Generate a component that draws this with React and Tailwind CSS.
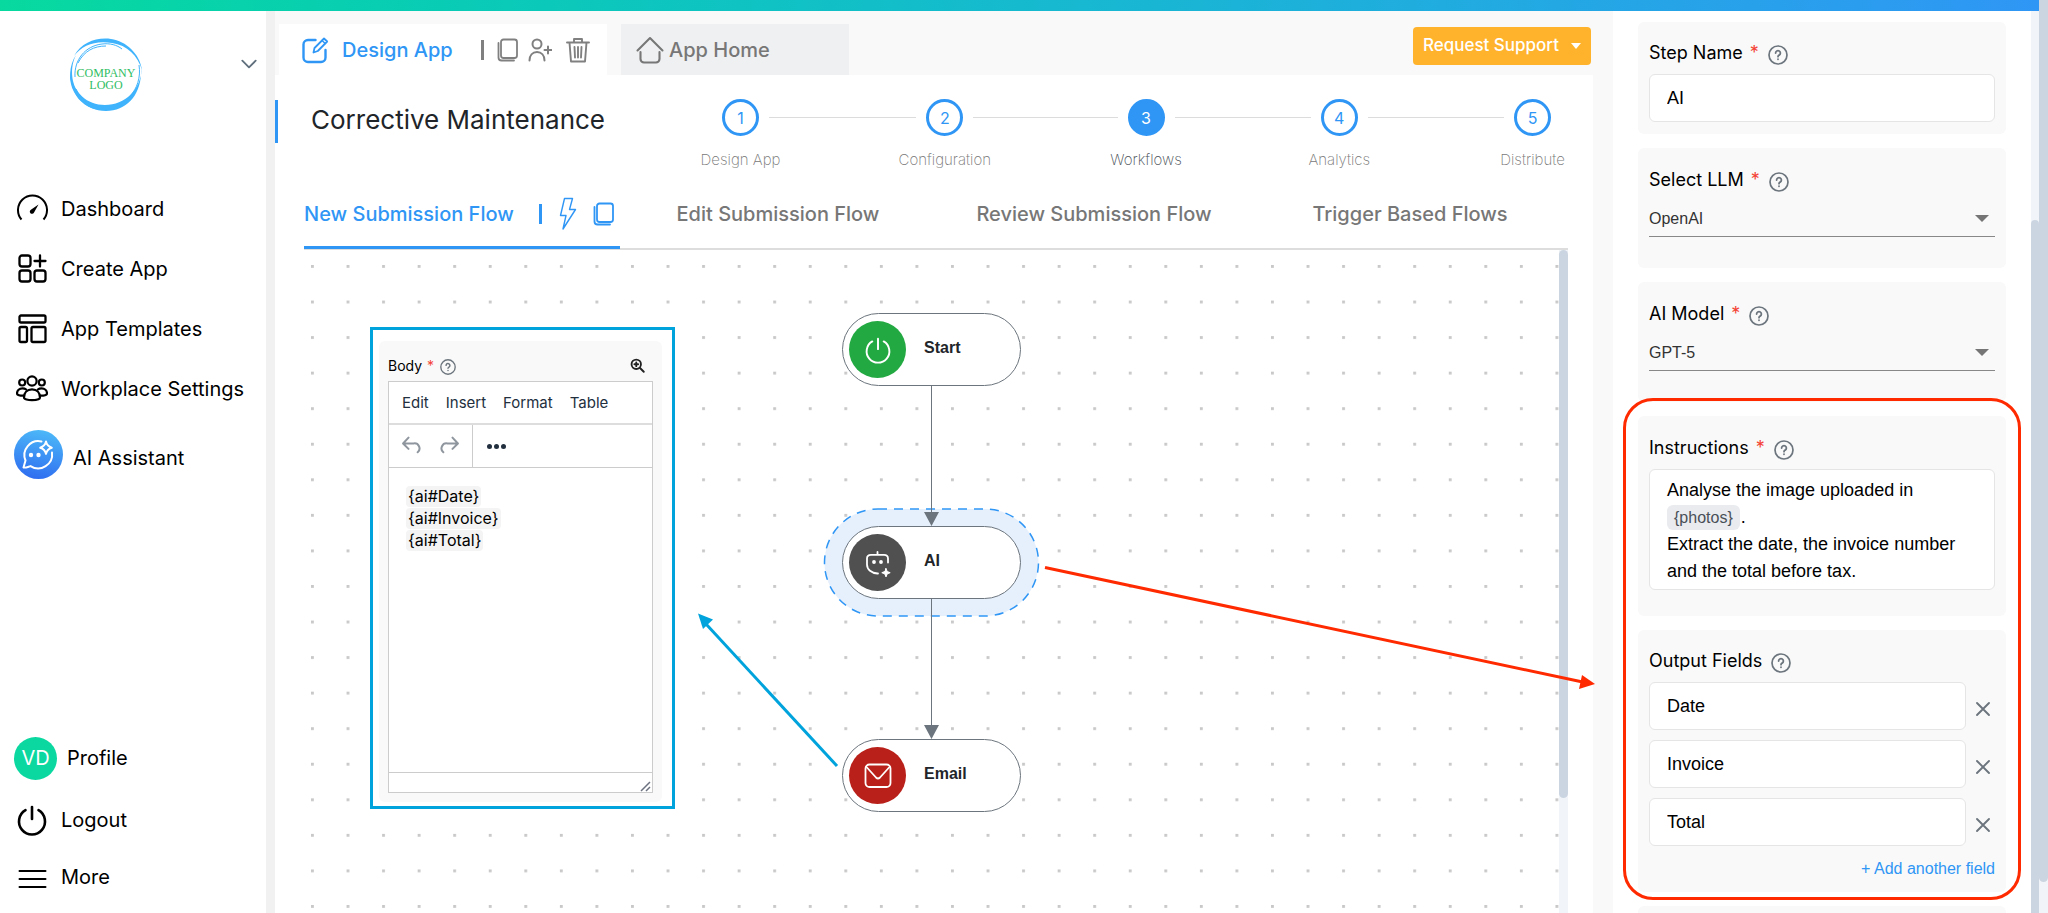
import { useState } from 'react';

const NAV = [
  { label: 'Dashboard', Icon: GaugeIcon },
  { label: 'Create App', Icon: CreateIcon },
  { label: 'App Templates', Icon: TemplateIcon },
  { label: 'Workplace Settings', Icon: TeamIcon },
];

const STEPS = [
  { label: 'Design App', grow: 'flex-[204]' },
  { label: 'Configuration', grow: 'flex-[201]' },
  { label: 'Workflows', grow: 'flex-[193]' },
  { label: 'Analytics', grow: 'flex-[193]' },
  { label: 'Distribute', grow: 'flex-none' },
];

const FLOWS = ['Edit Submission Flow', 'Review Submission Flow', 'Trigger Based Flows'];

function Svg({ className, children, box = '0 0 24 24', width = 2 }) {
  return (
    <svg viewBox={box} className={className} fill="none" stroke="currentColor" strokeWidth={width}
      strokeLinecap="round" strokeLinejoin="round" aria-hidden="true">
      {children}
    </svg>
  );
}

function GaugeIcon() {
  return (
    <Svg box="0 0 32 32" className="size-8">
      <path d="M5.5 26.5A14.5 14.5 0 1 1 27.5 26.5" strokeLinecap="butt" />
      <path d="M22.5 11.5l-4.6 8.2a2.2 2.2 0 1 1-3-3z" fill="currentColor" stroke="none" />
    </Svg>
  );
}

function CreateIcon() {
  return (
    <Svg box="0 0 32 32" className="size-8" width={2.3}>
      <rect x="3.5" y="2.5" width="11" height="11" rx="2.5" />
      <rect x="3.5" y="17.5" width="11" height="11" rx="2.5" />
      <rect x="18.5" y="17.5" width="11" height="11" rx="2.5" />
      <path d="M24 2.5v11M18.5 8h11" />
    </Svg>
  );
}

function TemplateIcon() {
  return (
    <Svg box="0 0 32 32" className="size-8" width={2.3}>
      <rect x="3.5" y="2.5" width="26" height="7" rx="1.5" />
      <rect x="3.5" y="14" width="7.5" height="15" rx="1.5" />
      <rect x="15.5" y="14" width="14" height="15" rx="1.5" />
    </Svg>
  );
}

function TeamIcon() {
  return (
    <Svg box="0 0 32 32" className="size-8" width={2.2}>
      <circle cx="16" cy="8" r="4.6" />
      <circle cx="6.2" cy="9.5" r="3" />
      <circle cx="25.8" cy="9.5" r="3" />
      <path d="M8 24.5c0-5 3.3-8.2 8-8.2s8 3.2 8 8.2c0 1.7-4 2.7-8 2.7s-8-1-8-2.700z" />
      <path d="M10.2 16.500c-1-.8-2.400-1.200-3.800-1.200-3 0-5.400 2.200-5.400 5.200 0 1.500 3 2.300 6.500 2.200M21.800 16.500c1-.8 2.400-1.200 3.800-1.200 3 0 5.400 2.200 5.400 5.200 0 1.500-3 2.300-6.500 2.200" />
    </Svg>
  );
}

function AssistantIcon() {
  return (
    <svg viewBox="0 0 49 49" className="size-[49px]" fill="none" aria-hidden="true">
      <defs>
        <linearGradient id="assistant" x1="0.6" y1="0" x2="0.4" y2="1">
          <stop offset="0" stopColor="#4cb8f8" />
          <stop offset="1" stopColor="#2f6df0" />
        </linearGradient>
      </defs>
      <circle cx="24.5" cy="24.5" r="24.5" fill="url(#assistant)" />
      <g stroke="#fff" strokeWidth="2" strokeLinecap="round" strokeLinejoin="round">
        <path d="M27.5 11.5A14 14 0 0 0 11.5 30.5L9.5 37.5c1.8.6 3.8-.4 7-1.400A14 14 0 0 0 38 22.500" />
        <path d="M32 11.5c.8 3.7 2 5 5.800 6.200-3.800 1.200-5 2.500-5.800 6.200-.8-3.700-2-5-5.800-6.200 3.800-1.200 5-2.500 5.800-6.200z" />
      </g>
      <circle cx="17" cy="25" r="2.2" fill="#fff" />
      <circle cx="24.5" cy="25" r="2.2" fill="#fff" />
    </svg>
  );
}

function PowerIcon({ className, width = 2.6 }) {
  return (
    <Svg box="0 0 32 32" className={className} width={width}>
      <path d="M16 3v12" />
      <path d="M9.5 6.2a13 13 0 1 0 13 0" />
    </Svg>
  );
}

function MenuIcon() {
  return (
    <Svg box="0 0 32 32" className="size-8">
      <path d="M3.5 8h26M3.5 16h26M3.5 24h26" />
    </Svg>
  );
}

function CopyIcon({ className }) {
  return (
    <Svg className={className} width={1.8}>
      <rect x="5" y="1.5" width="16" height="18.5" rx="2.5" />
      <path d="M2.5 5v14.5a3 3 0 0 0 3 3H18" />
    </Svg>
  );
}

function EditIcon() {
  return (
    <Svg box="0 0 28 28" className="size-7" width={2.4}>
      <path d="M14.5 4H7a4.500 4.500 0 0 0-4.500 4.500v13A4.500 4.500 0 0 0 7 26h13a4.500 4.500 0 0 0 4.500-4.500V14" />
      <path d="M12.500 16.500l1-4.500L23 2.500l3.200 3L16.800 15z" strokeWidth="1.8" />
      <path d="M21 4.500l3.200 3" strokeWidth="1.5" />
    </Svg>
  );
}

function UserPlusIcon() {
  return (
    <Svg className="size-6">
      <circle cx="9" cy="6" r="4.5" />
      <path d="M1.500 22.500c0-5 3-8.500 7.500-8.500s7.500 3.500 7.500 8.500M20 8.500v7M16.500 12h7" />
    </Svg>
  );
}

function TrashIcon() {
  return (
    <Svg box="0 0 26 26" className="size-[26px]" width={1.9}>
      <path d="M2 5.500h22M9 5.500V2h8v3.500M4.500 5.500L6 24.500h14l1.500-19M9.500 10l.5 10.500M13 10v10.500M16.500 10l-.5 10.500" />
    </Svg>
  );
}

function HomeIcon() {
  return (
    <Svg box="0 0 28 28" className="size-7" width={2.1}>
      <path d="M1.500 14.500L14 2l12.500 12.500" />
      <path d="M4.500 16v7a3.500 3.500 0 0 0 3.500 3.500h12a3.500 3.500 0 0 0 3.500-3.500v-7" />
    </Svg>
  );
}

function BoltIcon() {
  return (
    <Svg box="0 0 20 34" className="h-[34px] w-5" width={1.4}>
      <path d="M6.500 1.500h8l-3 11h6L5 32l3-13.500H2.500z" />
    </Svg>
  );
}

function HelpIcon({ className }) {
  return (
    <Svg box="0 0 20 20" className={className} width={1.7}>
      <circle cx="10" cy="10" r="9" />
      <path d="M7.600 8a2.400 2.400 0 1 1 3.600 2.100c-.8.500-1.200.8-1.200 1.600M10 14.200v.1" strokeWidth="1.8" />
    </Svg>
  );
}

function Logo() {
  return (
    <div className="relative size-[76px]">
      <svg viewBox="0 0 76 76" className="size-full" fill="#3fb4fd" aria-hidden="true">
        <path d="M6 19C14 5 29 0 43 2c15 2 29 15 31 31-4-14-15-25-30-27C28 3 14 8 6 19z" />
        <path d="M2 36c0 21 15 38 36 38 20 0 34-15 35-37l1-7c-1 23-17 38-37 38C19 68 6 56 2 36z" />
        <path d="M8 18C1 28 0 44 6 55c5 10 15 17 26 18C18 68 8 58 5 44 3 35 4 26 8 18z" />
        <g fill="none" stroke="#3fb4fd" strokeWidth="1">
          <path d="M7 40C6 23 17 9 34 7c8-1 15 1 20 5" />
          <path d="M10 26C16 14 26 9 38 9M8 52c4 9 12 15 20 17M71 28c2 12-2 24-9 31" />
        </g>
      </svg>
      <div className="absolute inset-x-0 top-[30px] text-center font-['Liberation_Serif',serif] text-[12px] leading-[12px] text-[#2fbd63]">
        COMPANY<br />LOGO
      </div>
    </div>
  );
}

function Sidebar() {
  return (
    <aside className="flex w-[275px] shrink-0 flex-col border-r-[9px] border-[#f1f1f1] bg-white text-[20px] text-black">
      <div className="flex h-[168px] shrink-0 items-start justify-between pt-[26px] pr-[7px] pl-[68px]">
        <Logo />
        <button aria-label="Switch company" className="mt-[17px] text-[#5f6f7c]">
          <Svg className="size-5" width={2.2}><path d="M4 8l8 8 8-8" /></Svg>
        </button>
      </div>
      <nav className="flex flex-1 flex-col">
        {NAV.map(({ label, Icon }) => (
          <a key={label} href="#" className="flex h-[60px] items-center gap-[13px] pl-4">
            <Icon /> {label}
          </a>
        ))}
        <a href="#" className="mt-[10px] flex h-[50px] items-center gap-[10px] pl-[14px]">
          <AssistantIcon /> <span className="pt-2">AI Assistant</span>
        </a>
        <a href="#" className="mt-auto flex h-[62px] items-center gap-[10px] pl-[14px]">
          <span className="flex size-[43px] items-center justify-center rounded-full bg-[#0bd8a0] text-white">VD</span>
          Profile
        </a>
        <a href="#" className="flex h-[62px] items-center gap-[13px] pl-4">
          <PowerIcon className="size-8" /> Logout
        </a>
        <a href="#" className="mb-[10px] flex h-[52px] items-center gap-[13px] pl-4">
          <span className="pt-1"><MenuIcon /></span> More
        </a>
      </nav>
    </aside>
  );
}

function Stepper() {
  return (
    <ol className="flex flex-1 pt-6">
      {STEPS.map(({ label, grow }, i) => (
        <li key={label} className={`flex items-start ${grow}`}>
          <div className="flex w-[37px] shrink-0 flex-col items-center gap-[14px]">
            <span className={`flex size-[37px] items-center justify-center rounded-full border-[3px] border-[#2f96f5] text-[16px] ${i === 2 ? 'bg-[#2f96f5] text-white' : 'text-[#2f96f5]'}`}>
              {i + 1}
            </span>
            <span className={`text-[15px] leading-5 font-extralight whitespace-nowrap ${i === 2 ? 'text-[#495057]' : 'text-[#777]'}`}>{label}</span>
          </div>
          {i < STEPS.length - 1 && <span className="mx-[10px] mt-[18px] h-px flex-1 bg-[#dcdcdc]" />}
        </li>
      ))}
    </ol>
  );
}

function BodyEditor() {
  return (
    <section className="absolute top-[77px] left-[66px] flex h-[482px] w-[305px] border-[3px] border-[#00a3dc] bg-white pt-[11px] pr-[10px] pb-1 pl-[6px]">
      <div className="flex flex-1 flex-col rounded-md bg-[#f9f9f9] px-[9px] pb-[9px]">
        <div className="flex h-10 items-center justify-between pt-2 pr-2 text-[14px] text-black">
          <span className="flex items-center">
            Body <span className="ml-[5px] text-[#f44336]">*</span>
            <HelpIcon className="mt-1 ml-[6px] size-4 text-[#6c757d]" />
          </span>
          <button aria-label="Expand" className="text-[#222]">
            <Svg className="size-[15px]" width={3}><circle cx="10" cy="10" r="7.5" /><path d="M16 16l6 6M10 7v6M7 10h6" /></Svg>
          </button>
        </div>
        <div className="flex flex-1 flex-col border border-[#ccc] bg-white">
          <div className="flex h-[43px] items-center gap-[17px] border-b-2 border-[#ddd] px-[13px] pt-[2px] text-[15px] text-[#222f3e]">
            {['Edit', 'Insert', 'Format', 'Table'].map(m => <button key={m}>{m}</button>)}
          </div>
          <div className="flex h-[43px] border-b border-[#ccc]">
            <div className="flex w-[84px] items-center gap-[19px] border-r border-[#ccc] pl-3 text-[#8f969e]">
              <button aria-label="Undo"><Svg className="size-5" width={2.4}><path d="M9 2L2.500 9 9 15.500M3 9h12a6 6 0 0 1 5 10.500" /></Svg></button>
              <button aria-label="Redo"><Svg className="size-5" width={2.4}><path d="M15 2l6.500 7-6.500 6.500M21 9H9a6 6 0 0 0-5 10.500" /></Svg></button>
            </div>
            <button aria-label="More tools" className="flex items-center gap-[2px] px-[14px]">
              {[0, 1, 2].map(d => <span key={d} className="size-[5px] rounded-full bg-[#222f3e]" />)}
            </button>
          </div>
          <div contentEditable suppressContentEditableWarning role="textbox" aria-label="Body"
            className="flex flex-1 flex-col items-start gap-px pt-[18px] pl-[17px] text-[16px] leading-[21px] text-black outline-none">
            {['{ai#Date}', '{ai#Invoice}', '{ai#Total}'].map(tag => (
              <span key={tag} className="rounded bg-[#f4f4f4] px-[2px]">{tag}</span>
            ))}
          </div>
          <div className="flex h-5 items-end justify-end border-t border-[#ccc]">
            <svg viewBox="0 0 12 12" className="size-3" stroke="#6c7280" strokeWidth="1.5"><path d="M1 11L10 2M6 11l4-4" /></svg>
          </div>
        </div>
      </div>
    </section>
  );
}

function FlowNode({ label, className, color, children }) {
  return (
    <div className={`absolute left-[538px] flex h-[73px] w-[179px] items-center rounded-full border border-[#6c757d] bg-white pl-[6px] ${className}`}>
      <span className={`flex size-[57px] items-center justify-center rounded-full text-white ${color}`}>{children}</span>
      <span className="ml-[18px] pb-1 font-['Liberation_Sans',sans-serif] text-[16px] font-bold text-[#222529]">{label}</span>
    </div>
  );
}

function FlowCanvas() {
  return (
    <div className="relative min-h-0 flex-1">
      <svg className="absolute inset-0 size-full" aria-hidden="true">
        <defs>
          <pattern id="grid" width="20" height="20" patternUnits="userSpaceOnUse" patternTransform="translate(7 15) scale(1.7778)">
            <rect width="1.6" height="1.6" fill="#c8c8c8" />
          </pattern>
        </defs>
        <rect width="100%" height="100%" fill="url(#grid)" />
        <rect x="520.5" y="259" width="214" height="107" rx="53.5" fill="#e6f0fc" stroke="#2f96f5" strokeWidth="1.5" strokeDasharray="9 7" />
        <path d="M627.5 135v140M627.5 348v140" stroke="#6c757d" />
        <path d="M620 262h15l-7.500 14zM620 475h15l-7.500 14z" fill="#6c757d" />
      </svg>
      <BodyEditor />
      <FlowNode label="Start" className="top-[63px]" color="bg-[#23a942]">
        <PowerIcon className="size-7" width={2.2} />
      </FlowNode>
      <FlowNode label="AI" className="top-[276px]" color="bg-[#505050]">
        <Svg box="0 0 28 28" className="size-7" width={1.8}>
          <path d="M14 24.500h-.5C7.500 24 3 20.500 3 15.500V9.500C3 7 4.500 5.800 7 5.800h13c2.500 0 4 1.200 4 3.700v4M13.500 5.500V3" />
          <circle cx="10" cy="13" r="1" fill="currentColor" /><circle cx="17" cy="13" r="1" fill="currentColor" />
          <path d="M22 19.500l1.200 3 3 1.200-3 1.200-1.200 3-1.200-3-3-1.200 3-1.200z" fill="currentColor" strokeWidth="1" />
        </Svg>
      </FlowNode>
      <FlowNode label="Email" className="top-[489px]" color="bg-[#b92019]">
        <Svg box="0 0 28 28" className="size-7" width={1.8}>
          <rect x="1.5" y="2.5" width="25" height="22.5" rx="4" />
          <path d="M2.500 5l9.500 10.500c1.300 1.300 2.700 1.300 4 0L25.500 5" />
        </Svg>
      </FlowNode>
      <div className="absolute top-0 right-0 flex h-full w-[9px] flex-col bg-[#f1f5f9]">
        <div className="h-[548px] rounded-full bg-[#cbd5e1]" />
      </div>
      <svg className="pointer-events-none absolute inset-0 z-10 size-full overflow-visible" aria-hidden="true">
        <path d="M533 516L402 374" stroke="#00a3dc" strokeWidth="3" />
        <path d="M394 363.500l15 6-10 9.500z" fill="#00a3dc" />
        <path d="M741 317.500l540 115" stroke="#ff2a00" strokeWidth="3" />
        <path d="M1291 434l-16 5 3-14z" fill="#ff2a00" />
      </svg>
    </div>
  );
}

function Main() {
  return (
    <main className="flex min-w-0 flex-1 flex-col bg-[#f9f9f9] pr-5">
      <div className="flex items-start pt-[13px] pl-1 text-[20px] font-medium">
        <div className="flex h-[51px] w-[328px] items-center bg-white pl-[22px] text-[#808080]">
          <a href="#" className="flex items-center gap-[13px] text-[#2f96f5]"><EditIcon /> Design App</a>
          <span className="ml-7 h-5 w-[3px] bg-[#808080]" />
          <button aria-label="Duplicate" className="ml-3"><CopyIcon className="size-6" /></button>
          <button aria-label="Add user" className="ml-2"><UserPlusIcon /></button>
          <button aria-label="Delete" className="ml-[13px]"><TrashIcon /></button>
        </div>
        <a href="#" className="ml-[14px] flex h-[51px] w-[228px] items-center gap-[5px] bg-[#eff0f2] pl-[15px] text-[#777]">
          <HomeIcon /> App Home
        </a>
        <button className="mt-[3px] mr-[2px] ml-auto flex h-[38px] items-center gap-3 rounded bg-[#ffb32c] px-[10px] text-[17px] text-white">
          Request Support
          <svg viewBox="0 0 10 6" className="h-[6px] w-[10px]" fill="currentColor"><path d="M0 0h10L5 6z" /></svg>
        </button>
      </div>

      <div className="flex min-h-0 flex-1 flex-col bg-white pr-[25px]">
        <div className="flex h-[104px] pr-[17px]">
          <h1 className="mt-[25px] h-[43px] w-[447px] border-l-[3px] border-[#2f96f5] pl-[33px] text-[26px] leading-[40px] text-[#212529]">
            Corrective Maintenance
          </h1>
          <Stepper />
        </div>
        <div className="ml-[29px] grid h-[71px] shrink-0 grid-cols-4 border-b-2 border-[#ddd] pt-4 text-[20px] font-medium text-[#777]">
          <div className="-mb-[1px] flex items-center border-b-[3px] border-[#2f96f5] pb-[14px] text-[#2f96f5]">
            <a href="#" className="shrink-0 whitespace-nowrap">New Submission Flow</a>
            <span className="ml-[25px] h-5 w-[3px] shrink-0 bg-[#2f96f5]" />
            <button aria-label="Triggers" className="ml-4 shrink-0"><BoltIcon /></button>
            <button aria-label="Duplicate flow" className="ml-[14px] shrink-0"><CopyIcon className="size-6" /></button>
          </div>
          {FLOWS.map(f => (
            <a key={f} href="#" className="flex items-center justify-center pb-4">{f}</a>
          ))}
        </div>
        <div className="ml-[29px] flex min-h-0 flex-1 flex-col"><FlowCanvas /></div>
      </div>
    </main>
  );
}

function FieldLabel({ htmlFor, required, children }) {
  return (
    <div className="flex items-center text-[18px] leading-6 text-black">
      <label htmlFor={htmlFor}>{children}</label>
      {required && <span className="ml-[7px] text-[#f44336]">*</span>}
      <HelpIcon className="mt-1 ml-[9px] size-5 text-[#6c757d]" />
    </div>
  );
}

function SelectCard({ id, label, options }) {
  return (
    <div className="h-[120px] shrink-0 rounded-md bg-[#f9f9f9] px-[11px] pt-5">
      <FieldLabel htmlFor={id} required>{label}</FieldLabel>
      <div className="relative mt-[6px]">
        <select id={id} className="h-[39px] w-full appearance-none border-b border-[#888] bg-transparent pt-1 font-['Liberation_Sans',sans-serif] text-[16px] text-[#333]">
          {options.map(o => <option key={o}>{o}</option>)}
        </select>
        <svg viewBox="0 0 14 7" className="pointer-events-none absolute top-[17px] right-[6px] h-[7px] w-[14px]" fill="#757575"><path d="M0 0h14L7 7z" /></svg>
      </div>
    </div>
  );
}

function SettingsPanel() {
  const [stepName, setStepName] = useState('AI');
  const [fields, setFields] = useState(['Date', 'Invoice', 'Total']);

  const updateField = (i, value) => setFields(fields.map((f, n) => (n === i ? value : f)));
  const removeField = (i) => setFields(fields.filter((_, n) => n !== i));

  return (
    <aside className="relative flex w-[418px] shrink-0 flex-col gap-[14px] bg-white pt-[11px] pr-[25px] pl-[25px]">
      <div className="h-[112px] shrink-0 rounded-md bg-[#f9f9f9] px-[11px] pt-[19px]">
        <FieldLabel htmlFor="step-name" required>Step Name</FieldLabel>
        <input id="step-name" value={stepName} onChange={e => setStepName(e.target.value)}
          className="mt-[9px] h-12 w-full rounded-md border border-[#e5e5e5] bg-white px-[17px] pt-px font-['Liberation_Sans',sans-serif] text-[18px] text-black" />
      </div>
      <SelectCard id="llm" label="Select LLM" options={['OpenAI']} />
      <SelectCard id="model" label="AI Model" options={['GPT-5']} />

      <div className="h-[200px] shrink-0 rounded-md bg-[#f9f9f9] px-[11px] pt-5">
        <FieldLabel required>Instructions</FieldLabel>
        <div contentEditable suppressContentEditableWarning role="textbox" aria-label="Instructions"
          className="mt-[9px] h-[121px] rounded-md border border-[#e5e5e5] bg-white px-[17px] pt-[7px] font-['Liberation_Sans',sans-serif] text-[18px] leading-[27px] text-black outline-none">
          Analyse the image uploaded in{' '}
          <span className="rounded-md bg-[#e9ebef] px-[7px] py-1 text-[16px] text-[#495057]">{'{photos}'}</span>
          <span className="ml-px">.</span><br />
          Extract the date, the invoice number and the total before tax.
        </div>
      </div>

      <div className="h-[262px] shrink-0 rounded-md bg-[#f9f9f9] px-[11px] pt-[19px]">
        <FieldLabel>Output Fields</FieldLabel>
        <div className="mt-[9px] flex flex-col gap-[10px]">
          {fields.map((f, i) => (
            <div key={i} className="flex items-center">
              <input aria-label={`Output field ${i + 1}`} value={f} onChange={e => updateField(i, e.target.value)}
                className="h-12 min-w-0 flex-1 rounded-md border border-[#e5e5e5] bg-white px-[17px] pt-px font-['Liberation_Sans',sans-serif] text-[18px] text-black" />
              <button aria-label="Remove field" onClick={() => removeField(i)} className="mt-[6px] mr-1 ml-[9px] text-[#6c757d]">
                <Svg box="0 0 16 16" className="size-4" width={1.9}><path d="M2 2l12 12M14 2L2 14" /></Svg>
              </button>
            </div>
          ))}
        </div>
        <div className="mt-[10px] text-right">
          <button onClick={() => setFields([...fields, ''])} className="font-['Liberation_Sans',sans-serif] text-[16px] text-[#2f96f5]">+ Add another field</button>
        </div>
      </div>
      <div className="h-10 shrink-0 rounded-md bg-[#f9f9f9]" />

      <div className="pointer-events-none absolute inset-x-[10px] top-[387px] h-[502px] rounded-[30px] border-[3px] border-[#ff2a00]" />
    </aside>
  );
}

export default function App() {
  return (
    <div className="flex h-screen overflow-hidden bg-white font-['Inter',sans-serif]">
      <div className="flex min-w-0 flex-1 flex-col">
        <header className="h-[11px] shrink-0 bg-linear-to-r from-[#08d99f] to-[#2f96f5]" />
        <div className="flex min-h-0 flex-1">
          <Sidebar />
          <Main />
          <SettingsPanel />
          <div className="w-2 shrink-0 bg-[#f1f5f9] pt-[209px]">
            <div className="h-full rounded-t-full bg-[#cbd5e1]" />
          </div>
        </div>
      </div>
      <div className="w-[9px] shrink-0 bg-[#f1f5f9] pb-[31px]">
        <div className="h-full rounded-b-full bg-[#cbd5e1]" />
      </div>
    </div>
  );
}
